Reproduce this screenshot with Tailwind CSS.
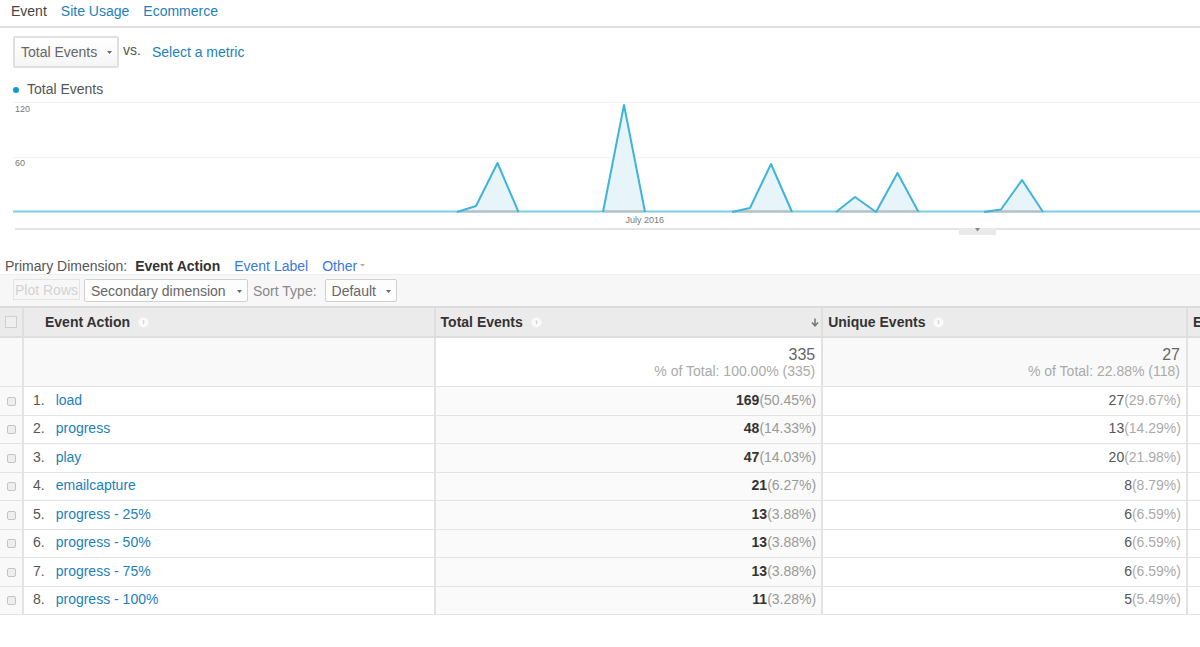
<!DOCTYPE html>
<html lang="en">
<head>
<meta charset="utf-8">
<title>Event Report</title>
<script src="https://cdn.jsdelivr.net/npm/@tailwindcss/browser@4"></script>
</head>
<body class="bg-white font-['Liberation_Sans',Arial,sans-serif] text-sm leading-4 text-[#555] overflow-x-hidden">

<nav class="flex gap-[14px] h-[28px] items-start pt-[3px] px-[11px] border-b-2 border-[#e0e0e0]">
  <span class="text-[#444]">Event</span>
  <a href="#usage" class="text-[#1d80bb]">Site Usage</a>
  <a href="#ecommerce" class="text-[#1d80bb]">Ecommerce</a>
</nav>

<section>
  <div class="flex items-center h-8 mt-2 px-[13px]">
    <div class="relative">
      <select aria-label="Metric" class="appearance-none block h-[32px] pl-[6px] pr-[19px] rounded-xs border-2 border-[#e0e0e0] bg-linear-to-b from-white to-[#f5f5f5] text-[#666]"><option>Total Events</option></select>
      <svg class="absolute right-[7px] top-[15px] pointer-events-none" width="5" height="3" viewBox="0 0 5 3"><path d="M0 0h5L2.500 3z" fill="#666"/></svg>
    </div>
    <span class="ml-1 pb-1">vs.</span>
    <a href="#metric" class="ml-[11px] text-[#1d80bb]">Select a metric</a>
  </div>

  <div class="flex items-center gap-2 h-4 mt-[13px] pl-[13px]">
    <span class="size-[6px] rounded-full bg-[#0c9bd0] mt-px"></span>
    <span>Total Events</span>
  </div>

  <div class="relative ml-[13px] mt-[5px] h-[126px] text-[9px] leading-3 text-[#777]">
    <svg class="block w-full h-[112px]" viewBox="0 0 1187 112" preserveAspectRatio="none" role="img" aria-label="Total Events over time">
      <path d="M0 .5H1187M0 55.500H1187" stroke="#f3f3f3" fill="none"/>
      <path d="M444 110L463 104 484.500 61 505.500 110zM590 110L611 3 632 110zM719 110L737 106 758 62 779 110zM823 110L842 95 863 110 884.500 71 905.500 110zM971 110L988 107.500 1009 78 1030 110z" fill="#e7f5fb"/>
      <path d="M0 109.500H1187" stroke="#7ecbe8" stroke-width="2"/>
      <path d="M446 109.500H505M591 109.500H631M721 109.500H778M824 109.500H904M974 109.500H1029" stroke="#bdbdbd" stroke-width="2"/>
      <path d="M444 110L463 104 484.500 61 505.500 110M590 110L611 3 632 110M719 110L737 106 758 62 779 110M823 110L842 95 863 110 884.500 71 905.500 110M971 110L988 107.500 1009 78 1030 110" stroke="#3fb4d9" stroke-width="2" fill="none" stroke-linejoin="round"/>
    </svg>
    <span class="absolute left-[2px] top-px">120</span>
    <span class="absolute left-[2px] top-[55px]">60</span>
    <span class="absolute left-[51.600%] top-[112px]">July 2016</span>
  </div>
  <div class="relative ml-[15px] h-[2px] bg-[#e4e4e4]">
    <button aria-label="Toggle annotations" class="absolute left-[79.700%] top-0 w-[37px] h-[7px] bg-[#e9e9e9] flex justify-center"><svg width="5" height="4" viewBox="0 0 5 4"><path d="M0 0h5L2.500 3.500z" fill="#888"/></svg></button>
  </div>
</section>

<section class="mt-[27px]">
  <div class="flex items-center h-[17px] pl-[5px] whitespace-pre">
    <span>Primary Dimension:</span>
    <strong class="ml-2 text-[#333]">Event Action</strong>
    <a href="#label" class="ml-[14px] text-[#3b78e0]">Event Label</a>
    <a href="#other" class="ml-[14px] text-[#3b78e0] flex items-center gap-[3px]">Other<svg width="5" height="3" viewBox="0 0 5 3"><path d="M0 0h5L2.500 2.500z" fill="#aaa"/></svg></a>
  </div>

  <div class="flex items-start h-[32px] pt-1 pl-[13px] bg-[#f7f7f7] border-t border-[#efefef]">
    <button disabled class="h-[21px] w-[67px] border border-[#e4e4e4] text-[#d2d2d2] whitespace-nowrap flex items-center justify-center">Plot Rows</button>
    <div class="relative ml-1">
      <select aria-label="Secondary dimension" class="appearance-none block h-[23px] pl-[6px] pr-[21px] border border-[#d0d0d0] rounded-xs bg-[#fdfdfd] text-[#666]"><option>Secondary dimension</option></select>
      <svg class="absolute right-[6px] top-[11px] pointer-events-none" width="5" height="3" viewBox="0 0 5 3"><path d="M0 0h5L2.500 3z" fill="#666"/></svg>
    </div>
    <label for="sort" class="ml-[5px] mt-1 text-[#888]">Sort Type:</label>
    <div class="relative ml-2">
      <select id="sort" class="appearance-none block h-[23px] pl-[6px] pr-[19px] border border-[#d0d0d0] rounded-xs bg-[#fdfdfd] text-[#666]"><option>Default</option></select>
      <svg class="absolute right-[6px] top-[11px] pointer-events-none" width="5" height="3" viewBox="0 0 5 3"><path d="M0 0h5L2.500 3z" fill="#666"/></svg>
    </div>
  </div>

  <table class="w-full table-fixed border-separate border-spacing-0 border-t-2 border-[#dcdcdc] [&_td]:border-b [&_td]:border-[#e3e3e3] [&_th]:border-b-2 [&_th]:border-[#dedede] [&_tr>*:not(:last-child)]:border-r-2 text-right">
    <colgroup><col class="w-6"><col class="w-[34.300%]"><col class="w-[32.300%]"><col class="w-[30.400%]"><col></colgroup>
    <thead>
      <tr class="h-[30px] bg-[#ebebeb] text-left text-[#333]">
        <th><input type="checkbox" aria-label="Select all rows" class="appearance-none block ml-[5px] size-3 border border-[#cfcfcf] bg-[#efefef]"></th>
        <th scope="col" class="pl-[21px]"><div class="flex items-center gap-2">Event Action<svg width="11" height="11" viewBox="0 0 11 11"><circle cx="5.500" cy="5.500" r="5" fill="#fafafa"/><path d="M4.500 4q1.500-1 1.500.4L5.500 6v1" stroke="#ccc" fill="none"/></svg></div></th>
        <th scope="col" class="pl-[5px]"><div class="flex items-center gap-2">Total Events<svg width="11" height="11" viewBox="0 0 11 11"><circle cx="5.500" cy="5.500" r="5" fill="#fafafa"/><path d="M4.500 4q1.500-1 1.500.4L5.500 6v1" stroke="#ccc" fill="none"/></svg><svg class="ml-auto mr-[2px] mt-px" width="8" height="9" viewBox="0 0 8 9"><path d="M4 .5V7.500M1 4.500L4 7.800 7 4.500" stroke="#777" stroke-width="1.500" fill="none"/></svg></div></th>
        <th scope="col" class="pl-[5px]"><div class="flex items-center gap-2">Unique Events<svg width="11" height="11" viewBox="0 0 11 11"><circle cx="5.500" cy="5.500" r="5" fill="#fafafa"/><path d="M4.500 4q1.500-1 1.500.4L5.500 6v1" stroke="#ccc" fill="none"/></svg></div></th>
        <th scope="col" class="pl-[5px] overflow-hidden">E</th>
      </tr>
      <tr class="h-[49px] bg-[#f9f9f9] text-[#aaa]">
        <td></td><td></td>
        <td class="bg-white pt-[2px] pr-[6px]"><div class="text-base leading-4 text-[#666]">335</div>% of Total: 100.00% (335)</td>
        <td class="pt-[2px] pr-[6px]"><div class="text-base leading-4 text-[#666]">27</div>% of Total: 22.88% (118)</td>
        <td></td>
      </tr>
    </thead>
    <tbody id="rows"></tbody>
  </table>
</section>

<script>
const data = [
  ["load", "169", "50.45", "27", "29.67"],
  ["progress", "48", "14.33", "13", "14.29"],
  ["play", "47", "14.03", "20", "21.98"],
  ["emailcapture", "21", "6.27", "8", "8.79"],
  ["progress - 25%", "13", "3.88", "6", "6.59"],
  ["progress - 50%", "13", "3.88", "6", "6.59"],
  ["progress - 75%", "13", "3.88", "6", "6.59"],
  ["progress - 100%", "11", "3.28", "5", "5.49"]
];
document.getElementById("rows").innerHTML = data.map(([name, total, totalPct, unique, uniquePct], i) => `
  <tr class="odd:h-[29px] even:h-[28px]">
    <td class="bg-[#f9f9f9]"><input type="checkbox" aria-label="Select ${name}" class="appearance-none block ml-[7px] size-[9px] rounded-xs border border-[#c4c4c4] bg-[#eee]"></td>
    <td class="text-left pl-[9px] pb-[3px]"><div class="flex gap-[11px]"><span>${i + 1}.</span><a href="#row${i + 1}" class="text-[#1d80bb]">${name}</a></div></td>
    <td class="bg-[#fafafa] pr-[5px] pb-[3px] text-[#999]"><b class="text-[#333]">${total}</b>(${totalPct}%)</td>
    <td class="pr-[5px] pb-[3px] text-[#aaa]"><span class="text-[#555]">${unique}</span>(${uniquePct}%)</td>
    <td></td>
  </tr>`).join("");
</script>
</body>
</html>
